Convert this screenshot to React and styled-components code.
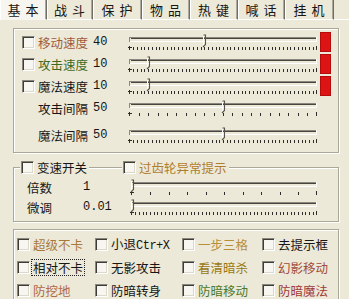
import React from "react";
import styled, { createGlobalStyle } from "styled-components";

const GlobalStyle = createGlobalStyle`
  html, body {
    margin: 0;
    padding: 0;
    background: #ece9d8;
    overflow: hidden;
  }
  body {
    font-family: "Noto Sans CJK SC", "Noto Sans", sans-serif;
    font-size: 12.5px;
    color: #161616;
  }
`;

const Window = styled.div`
  width: 349px;
  height: 299px;
  overflow: hidden;
  background: #ece9d8;
`;

const TabStrip = styled.div`
  display: flex;
  height: 20px;
`;

const Tab = styled.div`
  box-sizing: border-box;
  width: ${(p) => p.$w}px;
  height: 20px;
  display: flex;
  align-items: center;
  justify-content: center;
  font-size: 13px;
  letter-spacing: 1px;
  white-space: pre;
  background: ${(p) => (p.$active ? "#f6f5ef" : "#ece9d8")};
  border-left: 1px solid #fff;
  border-right: 1px solid #6f6d66;
  border-bottom: 1px solid ${(p) => (p.$active ? "transparent" : "#fff")};
  box-shadow: inset -1px 0 0 #aca899;
`;

const TabFiller = styled.div`
  flex: 1;
  border-bottom: 1px solid #fff;
`;

const Panel = styled.div`
  display: flex;
  flex-direction: column;
  padding: 8px 0 0 13px;
`;

const Group = styled.div`
  position: relative;
  box-sizing: border-box;
  width: 326px;
  margin-top: ${(p) => p.$mt || 0}px;
  padding: ${(p) => p.$pad};
  border: 1px solid #aca899;
  box-shadow: inset 1px 1px 0 #fff, 1px 1px 0 #fff;
`;

const SpeedRow = styled.div`
  display: grid;
  grid-template-columns: 16px 55px 35px 192px 11px;
  align-items: center;
  height: 22px;
  padding-left: 8px;
  margin-top: ${(p) => p.$mt || 0}px;
`;

const StepRow = styled.div`
  display: grid;
  grid-template-columns: 56px 47px 190px;
  align-items: center;
  height: 20px;
  padding-left: 13px;
`;

const Box = styled.span`
  box-sizing: border-box;
  display: inline-block;
  flex: none;
  width: 13px;
  height: 13px;
  background: #f7f6f1;
  border-top: 1px solid #8a877c;
  border-left: 1px solid #8a877c;
  border-bottom: 1px solid #fff;
  border-right: 1px solid #fff;
  box-shadow: inset 1px 1px 0 #3c3b36, inset -1px -1px 0 #dcd9cc;
`;

const Label = styled.span`
  color: ${(p) => p.$color || "#161616"};
  white-space: nowrap;
  line-height: 15px;
`;

const FocusLabel = styled(Label)`
  outline: 1px dotted #222;
  padding: 0 1px;
  margin-left: -1px;
`;

const Value = styled.span`
  font-family: "Liberation Mono", monospace;
  font-size: 12px;
`;

const Mono = styled.span`
  font-family: "Liberation Mono", monospace;
  font-size: 12px;
  letter-spacing: -0.5px;
`;

const Lamp = styled.span`
  width: 11px;
  height: 20px;
  background: #dc1414;
  box-shadow: inset 0 0 0 1px #b40c0c;
`;

const Legend = styled.div`
  position: absolute;
  top: -8px;
  left: 6px;
  display: flex;
  gap: 33px;
`;

const Check = styled.label`
  display: flex;
  align-items: center;
  gap: 3px;
  background: ${(p) => (p.$legend ? "#ece9d8" : "transparent")};
  padding: ${(p) => (p.$legend ? "0 2px 0 1px" : "0")};
`;

const OptionGrid = styled.div`
  display: grid;
  grid-template-columns: 78px 87px 80px 1fr;
  grid-auto-rows: 23px;
  align-items: center;
  padding-left: 3px;
`;

const Slider = ({ width = 190, value = 0, ticks = 51 }) => {
  const x0 = 1.5;
  const x1 = width - 3.5;
  const span = x1 - x0;
  const tx = Math.round(x0 + span * value) + 0.5;
  const marks = [];
  for (let i = 1; i < ticks - 1; i++) {
    const x = Math.round(x0 + (span * i) / (ticks - 1)) + 0.5;
    marks.push(<line key={i} x1={x} x2={x} y1={15} y2={17.5} />);
  }
  return (
    <svg width={width} height={20} viewBox={`0 0 ${width} 20`}>
      <g fill="none" strokeWidth="1" shapeRendering="crispEdges">
        <path d={`M${x0} 10 V5.5 H${x1}`} stroke="#8a877c" />
        <path d={`M${x0 + 1} 6.5 H${x1 - 1}`} stroke="#47453e" />
        <path d={`M${x0} 9.5 H${x1} V5`} stroke="#fff" />
        <g stroke="#2e2d29">
          {marks}
          <path d={`M${x0} 14 V18 M${x0 - 1.5} 15.5 H${x0 + 2}`} />
          <line x1={x1} x2={x1} y1={14} y2={18} />
        </g>
      </g>
      <path d={`M${tx - 1} 4 V13`} stroke="#fff" fill="none" />
      <path
        d={`M${tx - 1} 3 H${tx + 1} V12.5 L${tx - 1.5} 15`}
        stroke="#55534c"
        strokeWidth="1.1"
        fill="none"
      />
    </svg>
  );
};

const tabs = [
  ["基 本", 47],
  ["战 斗", 46],
  ["保 护", 49],
  ["物 品", 48],
  ["热 键", 48],
  ["喊 话", 47],
  ["挂 机", 49],
];

const speeds = [
  { name: "移动速度", color: "#a05a3c", value: "40", pos: 0.4, check: true, lamp: true },
  { name: "攻击速度", color: "#3d6a1e", value: "10", pos: 0.1, check: true, lamp: true },
  { name: "魔法速度", value: "10", pos: 0.1, check: true, lamp: true },
  { name: "攻击间隔", value: "50", pos: 0.5, ticks: 21 },
  { name: "魔法间隔", value: "50", pos: 0.5, mt: 5 },
];

const options = [
  { text: "超级不卡", color: "#a8783a" },
  { text: "小退", mono: "Ctr+X" },
  { text: "一步三格", color: "#b88e3a" },
  { text: "去提示框" },
  { text: "相对不卡", focus: true },
  { text: "无影攻击" },
  { text: "看清暗杀", color: "#9a7812" },
  { text: "幻影移动", color: "#a04a3a" },
  { text: "防挖地", color: "#b06a4a" },
  { text: "防暗转身" },
  { text: "防暗移动", color: "#4b7a2a" },
  { text: "防暗魔法", color: "#a03838" },
];

const App = () => {
  return (
    <Window>
      <GlobalStyle />
      <TabStrip>
        {tabs.map(([t, w], i) => (
          <Tab key={t} $w={w} $active={i === 0}>
            {t}
          </Tab>
        ))}
        <TabFiller />
      </TabStrip>
      <Panel>
        <Group $pad="2px 0 6px">
          {speeds.map((s) => (
            <SpeedRow key={s.name} $mt={s.mt}>
              {s.check ? <Box /> : <span />}
              <Label $color={s.color}>{s.name}</Label>
              <Value>{s.value}</Value>
              <Slider width={192} value={s.pos} ticks={s.ticks || 51} />
              {s.lamp ? <Lamp /> : <span />}
            </SpeedRow>
          ))}
        </Group>

        <Group $mt={14} $pad="9px 0 4px">
          <Legend>
            <Check $legend>
              <Box />
              <Label>变速开关</Label>
            </Check>
            <Check $legend>
              <Box />
              <Label $color="#b07d2c">过齿轮异常提示</Label>
            </Check>
          </Legend>
          <StepRow>
            <Label>倍数</Label>
            <Value>1</Value>
            <Slider width={190} value={0} ticks={11} />
          </StepRow>
          <StepRow>
            <Label>微调</Label>
            <Value>0.01</Value>
            <Slider width={190} value={0} ticks={51} />
          </StepRow>
        </Group>

        <Group $mt={7} $pad="3px 0 6px">
          <OptionGrid>
            {options.map((o) => {
              const L = o.focus ? FocusLabel : Label;
              return (
                <Check key={o.text}>
                  <Box />
                  <L $color={o.color}>
                    {o.text}
                    {o.mono && <Mono>{o.mono}</Mono>}
                  </L>
                </Check>
              );
            })}
          </OptionGrid>
        </Group>
      </Panel>
    </Window>
  );
};

export default App;
